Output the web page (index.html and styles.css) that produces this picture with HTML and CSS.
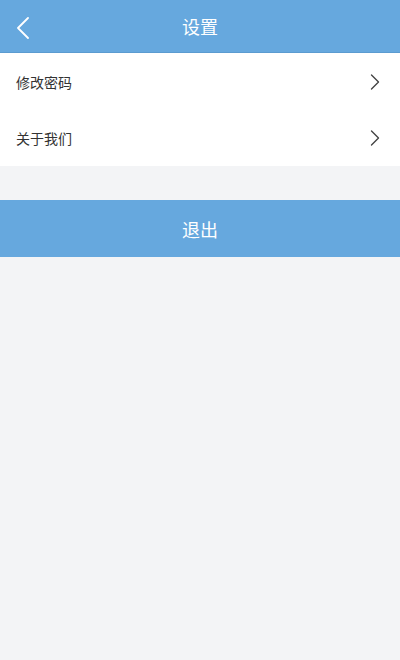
FILE: index.html
```html
<!DOCTYPE html>
<html lang="zh">
<head>
<meta charset="utf-8">
<title>设置</title>
<link rel="stylesheet" href="styles.css">
</head>
<body>
<div class="page">
  <header class="topbar">
    <span class="back">
      <svg width="14" height="22" viewBox="0 0 14 22"><path d="M12 1 L2 11 L12 21" fill="none" stroke="#fff" stroke-width="1.8" stroke-linecap="round" stroke-linejoin="round"/></svg>
    </span>
    <h1 class="title">设置</h1>
  </header>
  <ul class="list">
    <li class="row"><span>修改密码</span>
      <svg class="chev" width="10" height="16" viewBox="0 0 10 16"><path d="M1.5 1 L8.5 8 L1.5 15" fill="none" stroke="#444" stroke-width="1.4" stroke-linecap="round" stroke-linejoin="round"/></svg>
    </li>
    <li class="row"><span>关于我们</span>
      <svg class="chev" width="10" height="16" viewBox="0 0 10 16"><path d="M1.5 1 L8.5 8 L1.5 15" fill="none" stroke="#444" stroke-width="1.4" stroke-linecap="round" stroke-linejoin="round"/></svg>
    </li>
  </ul>
  <button class="logout">退出</button>
</div>
</body>
</html>
```
FILE: styles.css
```css
html, body {
  margin: 0;
  padding: 0;
  background: #f3f4f6;
  font-family: "Noto Sans CJK SC", "Noto Sans", sans-serif;
}
.page {
  width: 400px;
  min-height: 660px;
  background: #f3f4f6;
}
.topbar {
  height: 52px;
  background: #66a8de;
  border-bottom: 1px solid #5b9bd0;
  display: flex;
  align-items: center;
  justify-content: center;
  position: relative;
}
.back {
  position: absolute;
  left: 16px;
  top: 17px;
  display: flex;
}
.title {
  margin: 0;
  color: #fff;
  font-size: 18px;
  font-weight: 400;
  line-height: 1;
}
.list {
  list-style: none;
  margin: 0;
  padding: 0;
  background: #fff;
}
.row {
  height: 57px;
  display: flex;
  align-items: center;
  justify-content: space-between;
  padding: 0 20px 0 16px;
  font-size: 14px;
  color: #333;
}
.row:first-child { height: 57px; }
.row:last-child { height: 56px; }
.logout {
  display: block;
  width: 100%;
  height: 57px;
  margin-top: 34px;
  border: 0;
  background: #66a8de;
  color: #fff;
  font-family: inherit;
  font-size: 18px;
  padding: 0;
}
```
